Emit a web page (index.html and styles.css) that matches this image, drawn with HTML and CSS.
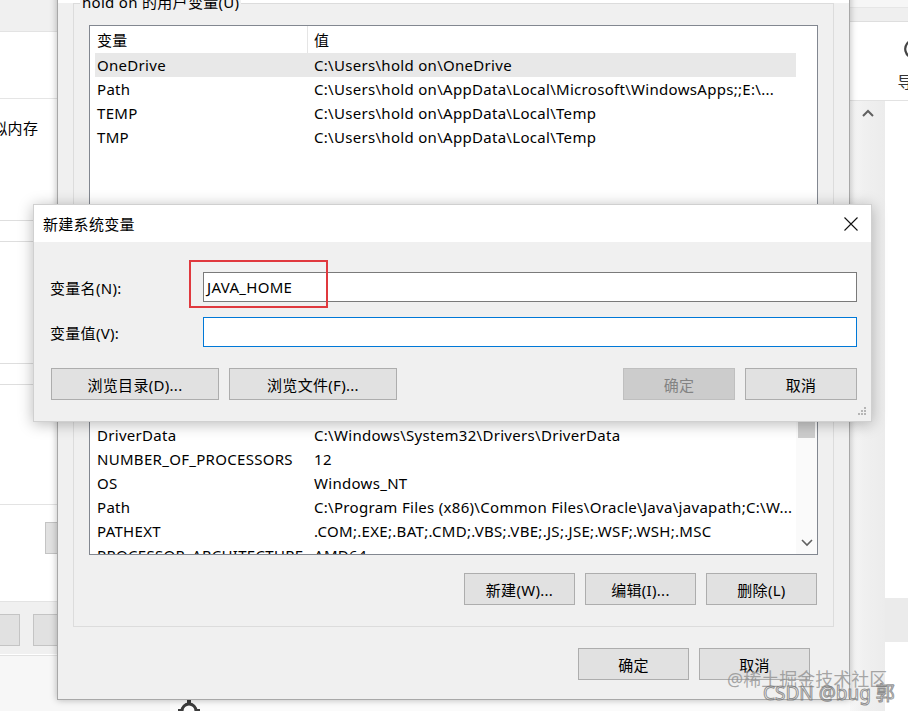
FILE: index.html
```html
<!DOCTYPE html>
<html lang="zh-CN">
<head>
  <meta charset="UTF-8" />
  <title>新建系统变量</title>
  <link rel="stylesheet" href="styles.css">
</head>
<body>
  <div class="desk">

    <!-- system properties window, mostly hidden -->
    <div class="bg-left">
      <div class="bl-band"></div>
      <div class="bl-white"></div>
      <div class="bl-text">虚拟内存</div>
      <div class="bl-field"></div>
      <div class="bl-field bl-field2"></div>
      <div class="bl-line"></div>
      <div class="bl-btnrow"><span class="bl-btn"></span></div>
      <div class="bl-foot">
        <span class="bl-btn bl-btn-a"></span>
        <span class="bl-btn bl-btn-b"></span>
      </div>
    </div>

    <!-- settings app behind -->
    <div class="bg-app">
      <div class="app-top"></div>
      <div class="app-band"></div>
      <div class="app-head">
        <div class="app-tool">
          <svg class="tool-icon" width="26" height="24" viewBox="0 0 26 24">
            <path d="M20 6 A9 9 0 1 0 22 14" fill="none" stroke="#444" stroke-width="2.2"/>
            <path d="M14 2 L20 6 L14 9" fill="none" stroke="#444" stroke-width="2.2"/>
          </svg>
          <span>导入</span>
        </div>
      </div>
      <div class="app-body">
        <div class="app-main">
          <svg class="gear" width="26" height="26" viewBox="0 0 26 26">
            <circle cx="13" cy="13" r="7" fill="none" stroke="#3c3c3c" stroke-width="3"/>
            <rect x="11" y="1" width="4" height="5" fill="#3c3c3c"/>
            <rect x="2" y="11" width="5" height="4" fill="#3c3c3c"/>
            <rect x="19" y="11" width="5" height="4" fill="#3c3c3c"/>
          </svg>
        </div>
        <div class="app-col">
          <svg width="12" height="8" viewBox="0 0 12 8"><polyline points="1,7 6,2 11,7" fill="none" stroke="#606060" stroke-width="2"/></svg>
        </div>
        <div class="app-side"><div class="side-block"></div></div>
      </div>
    </div>

    <!-- environment variables window -->
    <div class="win">
      <div class="win-title">环境变量</div>
      <div class="win-body">
        <div class="group group-user">
          <div class="group-title">hold on 的用户变量(U)</div>
          <div class="list list-user">
            <div class="list-main">
              <div class="list-head">
                <span class="h1">变量</span><span class="hsep"></span><span class="h2">值</span>
              </div>
              <div class="row sel"><span>OneDrive</span><span>C:\Users\hold on\OneDrive</span></div>
              <div class="row"><span>Path</span><span>C:\Users\hold on\AppData\Local\Microsoft\WindowsApps;;E:\...</span></div>
              <div class="row"><span>TEMP</span><span>C:\Users\hold on\AppData\Local\Temp</span></div>
              <div class="row"><span>TMP</span><span>C:\Users\hold on\AppData\Local\Temp</span></div>
            </div>
          </div>
          <div class="btn-row">
            <button class="btn">新建(N)...</button>
            <button class="btn">编辑(E)...</button>
            <button class="btn">删除(D)</button>
          </div>
        </div>

        <div class="group group-sys">
          <div class="group-title">系统变量(S)</div>
          <div class="list list-sys">
            <div class="list-main">
              <div class="list-head">
                <span class="h1">变量</span><span class="hsep"></span><span class="h2">值</span>
              </div>
              <div class="row"><span>ComSpec</span><span>C:\Windows\system32\cmd.exe</span></div>
              <div class="row"><span>DriverData</span><span>C:\Windows\System32\Drivers\DriverData</span></div>
              <div class="row"><span>NUMBER_OF_PROCESSORS</span><span>12</span></div>
              <div class="row"><span>OS</span><span>Windows_NT</span></div>
              <div class="row"><span>Path</span><span>C:\Program Files (x86)\Common Files\Oracle\Java\javapath;C:\W...</span></div>
              <div class="row"><span>PATHEXT</span><span>.COM;.EXE;.BAT;.CMD;.VBS;.VBE;.JS;.JSE;.WSF;.WSH;.MSC</span></div>
              <div class="row"><span>PROCESSOR_ARCHITECTURE</span><span>AMD64</span></div>
            </div>
            <div class="vscroll">
              <div class="vs-arrow"></div>
              <div class="vs-thumb"></div>
              <div class="vs-track"></div>
              <div class="vs-arrow">
                <svg width="12" height="8" viewBox="0 0 12 8"><polyline points="1,1 6,6 11,1" fill="none" stroke="#606060" stroke-width="1.6"/></svg>
              </div>
            </div>
          </div>
          <div class="btn-row">
            <button class="btn">新建(W)...</button>
            <button class="btn">编辑(I)...</button>
            <button class="btn">删除(L)</button>
          </div>
        </div>

        <div class="btn-row foot">
          <button class="btn">确定</button>
          <button class="btn">取消</button>
        </div>
      </div>
    </div>

    <!-- new system variable dialog -->
    <div class="dialog">
      <div class="dlg-title">
        <span>新建系统变量</span>
        <span class="dlg-close">
          <svg width="14" height="14" viewBox="0 0 14 14">
            <path d="M0.5 0.5 L13.5 13.5 M13.5 0.5 L0.5 13.5" stroke="#111" stroke-width="1.1"/>
          </svg>
        </span>
      </div>
      <div class="dlg-body">
        <div class="field">
          <label class="field-label">变量名(N):</label>
          <div class="input">JAVA_HOME</div>
        </div>
        <div class="field">
          <label class="field-label">变量值(V):</label>
          <div class="input focus"></div>
        </div>
        <div class="dlg-btns">
          <button class="btn btn-wide">浏览目录(D)...</button>
          <button class="btn btn-wide">浏览文件(F)...</button>
          <span class="spacer"></span>
          <button class="btn btn-dlg" disabled>确定</button>
          <button class="btn btn-dlg">取消</button>
        </div>
        <svg class="grip" width="9" height="9" viewBox="0 0 9 9">
          <rect x="6" y="0" width="2" height="2" fill="#b5b5b5"/>
          <rect x="3" y="3" width="2" height="2" fill="#b5b5b5"/>
          <rect x="6" y="3" width="2" height="2" fill="#b5b5b5"/>
          <rect x="0" y="6" width="2" height="2" fill="#b5b5b5"/>
          <rect x="3" y="6" width="2" height="2" fill="#b5b5b5"/>
          <rect x="6" y="6" width="2" height="2" fill="#b5b5b5"/>
        </svg>
      </div>
    </div>

    <div class="highlight"></div>

    <div class="watermark">
      <div class="wm1">@稀土掘金技术社区</div>
      <div class="wm2">CSDN @bug 郭</div>
    </div>
  </div>
</body>
</html>
```

FILE: styles.css
```css
body {
  margin: 0;
  font-family: "Noto Sans", "Noto Sans CJK SC", sans-serif;
  font-size: 15px;
  letter-spacing: 0.3px;
  color: #000;
  background: #f7f7f7;
}

.desk {
  position: relative;
  width: 908px;
  height: 711px;
  overflow: hidden;
}

/* ---------- background: left window ---------- */
.bg-left {
  position: absolute;
  left: 0;
  top: 0;
  width: 200px;
  height: 655px;
  background: #fff;
  border-bottom: 1px solid #e2e2e2;
}

.bl-band {
  height: 31px;
  background: #f0f0f0;
  border-bottom: 1px solid #e3e3e3;
}

.bl-white {
  height: 66px;
  border-bottom: 1px solid #e5e5e5;
}

.bl-text {
  padding-top: 19px;
  margin-left: -23px;
  line-height: 20px;
  height: 102px;
}

.bl-field {
  height: 20px;
  border-top: 1px solid #dedede;
  border-bottom: 1px solid #dedede;
}

.bl-field2 {
  margin-top: 121px;
}

.bl-line {
  height: 119px;
  border-bottom: 1px solid #e3e3e3;
}

.bl-btnrow {
  height: 97px;
  padding-top: 17px;
  box-sizing: border-box;
  border-bottom: 1px solid #e3e3e3;
}

.bl-btn {
  display: inline-block;
  height: 32px;
  width: 60px;
  background: #e1e1e1;
  border: 1px solid #c4c4c4;
  box-sizing: border-box;
  margin-left: 45px;
}

.bl-foot {
  height: 52px;
  background: #f0f0f0;
  padding-top: 12px;
  box-sizing: border-box;
  display: flex;
}

.bl-foot .bl-btn-a {
  margin-left: -40px;
}

.bl-foot .bl-btn-b {
  margin-left: 13px;
}

/* ---------- background: settings app ---------- */
.bg-app {
  position: absolute;
  left: 170px;
  top: 0;
  width: 738px;
  height: 711px;
  background: #fbfbfb;
  display: flex;
  flex-direction: column;
}

.app-top {
  height: 7px;
  background: #f6f6f6;
  border-bottom: 1px solid #e6e6e6;
}

.app-band {
  height: 13px;
  background: #efefef;
  border-bottom: 1px solid #dedede;
}

.app-head {
  height: 78px;
  background: #fff;
  border-bottom: 1px solid #e2e2e2;
  display: flex;
  justify-content: flex-end;
}

.app-tool {
  display: flex;
  flex-direction: column;
  align-items: center;
  margin-right: -22px;
  padding-top: 15px;
  color: #333;
  font-size: 16px;
  line-height: 22px;
}

.tool-icon {
  margin-bottom: 10px;
}

.app-body {
  flex: 1;
  display: flex;
}

.app-main {
  width: 680px;
  display: flex;
  align-items: flex-end;
}

.gear {
  margin-left: 6px;
  margin-bottom: -13px;
}

.app-col {
  width: 35px;
  background: linear-gradient(to right, #f7f7f7, #f0f0f0 40%, #ececec);
  display: flex;
  justify-content: center;
  padding-top: 8px;
  box-sizing: border-box;
}

.app-side {
  flex: 1;
  background: #fff;
  padding-top: 497px;
}

.side-block {
  height: 44px;
  background: #ebebeb;
}

/* ---------- environment variables window ---------- */
.win {
  position: absolute;
  left: 57px;
  top: -40px;
  width: 793px;
  height: 740px;
  box-sizing: border-box;
  background: #f0f0f0;
  border: 1px solid #a8a8a8;
  box-shadow: 0 0 7px rgba(0, 0, 0, 0.28);
}

.win-title {
  height: 42px;
  line-height: 42px;
  padding-left: 12px;
  background: #fff;
  color: #fff;
}

.win-body {
  padding: 0 15px;
}

.group {
  border: 1px solid #dcdcdc;
  padding: 0 15px 21px;
}

.group-sys {
  margin-top: 11px;
}

.group-title {
  display: table;
  margin: -12px 0 13px -9px;
  padding: 0 2px;
  line-height: 20px;
  background: #f0f0f0;
}

.list {
  border: 1px solid #828790;
  background: #fff;
  overflow: hidden;
  display: flex;
  box-sizing: border-box;
}

.list-user {
  height: 241px;
}

.list-sys {
  height: 184px;
}

.list-main {
  flex: 1;
  padding-right: 21px;
}

.list-sys .list-main {
  padding-right: 0;
}

.list-head {
  height: 27px;
  display: flex;
  align-items: center;
  margin-left: 5px;
}

.h1 {
  width: 210px;
  padding-left: 2px;
}

.hsep {
  width: 1px;
  height: 27px;
  background: #e5e5e5;
}

.h2 {
  padding-left: 6px;
}

.row {
  display: grid;
  grid-template-columns: 217px 1fr;
  height: 24px;
  line-height: 24px;
  margin-left: 5px;
  white-space: nowrap;
}

.row span {
  padding-left: 2px;
  overflow: hidden;
}

.row.sel {
  background: #e8e8e8;
}

.vscroll {
  width: 21px;
  background: #fafafa;
  display: flex;
  flex-direction: column;
}

.vs-arrow {
  height: 22px;
  display: flex;
  align-items: center;
  justify-content: center;
}

.vs-thumb {
  margin: 9px 2px 0;
  height: 35px;
  background: #cdcdcd;
}

.vs-track {
  flex: 1;
}

.btn-row {
  display: flex;
  justify-content: flex-end;
  gap: 10px;
  margin-top: 18px;
  margin-right: 1px;
}

.btn {
  width: 111px;
  height: 32px;
  padding: 0;
  border: 1px solid #adadad;
  background: #e1e1e1;
  font: inherit;
  letter-spacing: inherit;
  color: #000;
}

.foot {
  margin-top: 21px;
  margin-right: 24px;
  gap: 10px;
}

/* ---------- new variable dialog ---------- */
.dialog {
  position: absolute;
  left: 33px;
  top: 204px;
  width: 839px;
  height: 218px;
  box-sizing: border-box;
  background: #f0f0f0;
  border: 1px solid #d0d0d0;
  box-shadow: 0 2px 14px rgba(0, 0, 0, 0.28);
}

.dlg-title {
  height: 37px;
  background: #fff;
  display: flex;
  align-items: center;
  justify-content: space-between;
  padding-left: 9px;
}

.dlg-close {
  width: 40px;
  display: flex;
  justify-content: center;
}

.dlg-body {
  padding: 30px 14px 0 16px;
  display: flex;
  flex-direction: column;
}

.field {
  display: flex;
  align-items: center;
  height: 30px;
  margin-bottom: 15px;
}

.field-label {
  width: 153px;
}

.input {
  flex: 1;
  height: 30px;
  box-sizing: border-box;
  border: 1px solid #7a7a7a;
  background: #fff;
  padding-left: 3px;
  line-height: 28px;
}

.input.focus {
  border-color: #0078d7;
}

.dlg-btns {
  display: flex;
  gap: 10px;
  margin-top: 6px;
  margin-left: 1px;
}

.btn-wide {
  width: 168px;
}

.btn-dlg {
  width: 112px;
}

.btn:disabled {
  background: #cccccc;
  border-color: #bfbfbf;
  color: #838383;
}

.spacer {
  flex: 1;
}

.grip {
  align-self: flex-end;
  margin: 7px -10px 0 0;
}

/* ---------- annotation ---------- */
.highlight {
  position: absolute;
  left: 189px;
  top: 260px;
  width: 135px;
  height: 44px;
  border: 2px solid #e0393e;
}

.watermark {
  position: absolute;
  left: 727px;
  top: 668px;
  width: 181px;
  white-space: nowrap;
  letter-spacing: 0;
}

.wm1 {
  font-size: 18px;
  line-height: 22px;
  color: rgba(140, 140, 140, 0.75);
}

.wm2 {
  margin: -10px 0 0 36px;
  font-size: 19px;
  line-height: 26px;
  color: rgba(255, 255, 255, 0.4);
  -webkit-text-stroke: 1px rgba(100, 100, 100, 0.7);
}
```
